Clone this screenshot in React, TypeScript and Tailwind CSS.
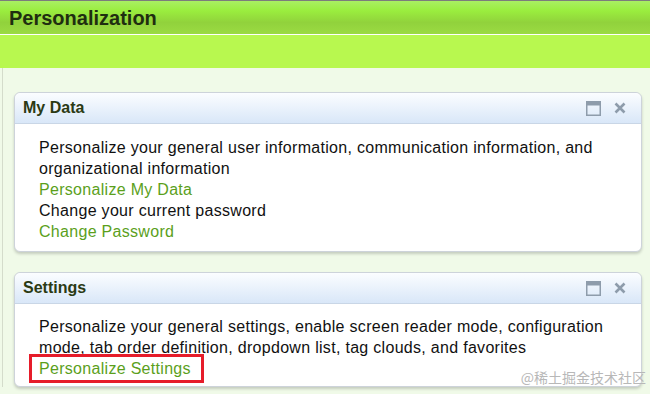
import React from 'react'

const FONT = { fontFamily: '"Liberation Sans", Arial, sans-serif' }

function MaxIcon() {
  return (
    <svg width="15" height="15" viewBox="0 0 15 15" className="block">
      <rect x="0.75" y="0.75" width="13.5" height="13.5" fill="none" stroke="#8e9cab" strokeWidth="1.5" />
      <rect x="1" y="1" width="13" height="3.5" fill="#8e9cab" />
    </svg>
  )
}

function CloseIcon() {
  return (
    <svg width="12" height="12" viewBox="0 0 12 12" className="block">
      <path d="M1.5 1.5 L10.5 10.5 M10.5 1.5 L1.5 10.5" stroke="#8e9cab" strokeWidth="2.6" strokeLinecap="butt" />
    </svg>
  )
}

function Portlet({ title, children, bodyClass }: { title: string; children: React.ReactNode; bodyClass: string }) {
  return (
    <div className="rounded-[6px] border border-[#cdd3da] bg-white shadow-[0_2px_3px_rgba(0,0,0,0.18)]">
      <div className="flex h-[31px] items-center justify-between rounded-t-[6px] border-b border-[#c9d6e6] bg-gradient-to-b from-[#fbfdff] to-[#d9e7f8] pl-[8px] pr-[15px]">
        <h2 className="text-[16px] font-bold text-[#2b3a14]">{title}</h2>
        <div className="flex items-center gap-[13px]">
          <MaxIcon />
          <CloseIcon />
        </div>
      </div>
      <div className={`pl-[24px] pr-[20px] text-[16px] leading-[21px] tracking-[0.3px] text-[#111] ${bodyClass}`}>{children}</div>
    </div>
  )
}

function Link({ children }: { children: React.ReactNode }) {
  return <a className="text-[#5b9f1c]">{children}</a>
}

export default function App() {
  return (
    <div className="relative h-[394px] w-[650px] overflow-hidden bg-[#f0fae8]" style={FONT}>
      <div className="border-t border-[#7c7c7c]">
        <div className="flex h-[33px] items-center bg-[linear-gradient(to_bottom,#a9ef63_0%,#9aed3e_30%,#91d23c_65%,#9bdb43_100%)] pl-[9px]">
          <h1 className="text-[20px] font-bold text-[#1f2e10]">Personalization</h1>
        </div>
        <div className="h-px bg-white" />
        <div className="h-[33px] bg-[#b8f84f]" />
      </div>

      <div className="ml-[2px] flex flex-col gap-[20px] border-l border-[#d4dccb] pl-[11px] pr-[8px] pt-[24px]">
        <Portlet title="My Data" bodyClass="pt-[13px] pb-[9px]">
          <p>Personalize your general user information, communication information, and organizational information</p>
          <Link>Personalize My Data</Link>
          <p>Change your current password</p>
          <Link>Change Password</Link>
        </Portlet>

        <Portlet title="Settings" bodyClass="pt-[12px] pb-[7px]">
          <p>Personalize your general settings, enable screen reader mode, configuration mode, tab order definition, dropdown list, tag clouds, and favorites</p>
          <div className="relative inline-block">
            <Link>Personalize Settings</Link>
            <div className="absolute -bottom-[4px] -left-[10px] -right-[13px] -top-[4px] border-[3px] border-[#e61c2a]" />
          </div>
        </Portlet>
      </div>

      <div className="absolute bottom-[6px] right-[4px] text-[14px] text-[#b8b8b8]" style={{ fontFamily: '"Noto Sans CJK SC", sans-serif' }}>
        @稀土掘金技术社区
      </div>
    </div>
  )
}
